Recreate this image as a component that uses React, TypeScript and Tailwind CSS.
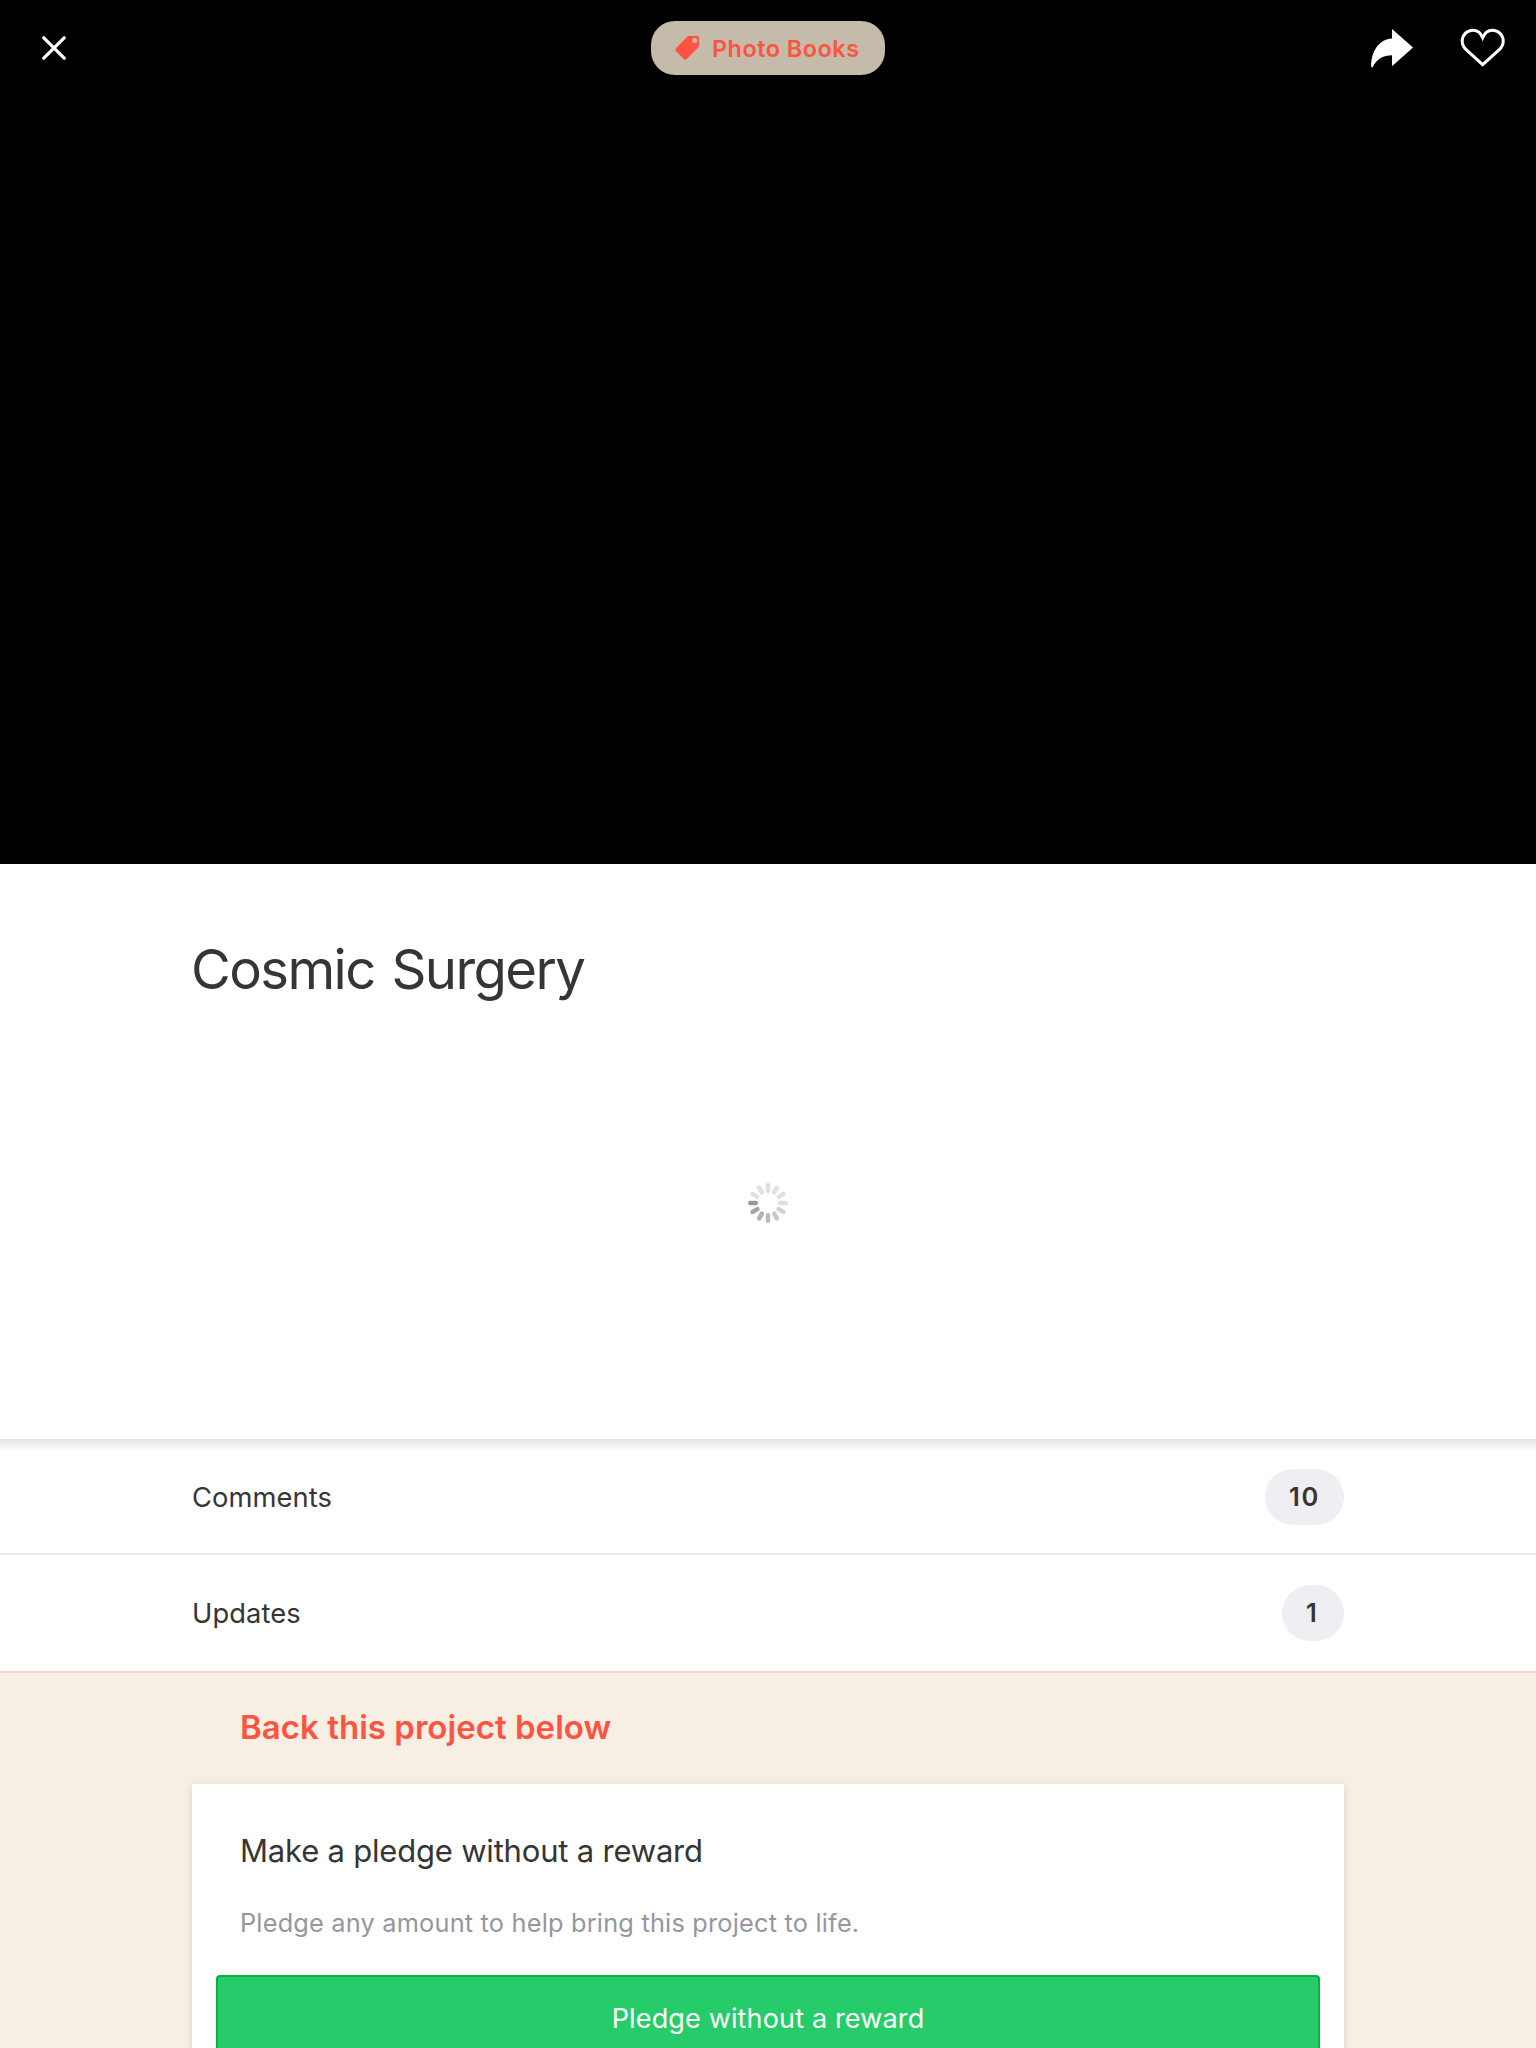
const spokes = [
  "#e0e0e0", "#e0e0e0", "#e0e0e0", "#dedede", "#d2d2d2", "#c8c8c8",
  "#bababa", "#b0b0b0", "#a4a4a4", "#999999", "#e0e0e0", "#e0e0e0",
];

function Spinner() {
  return (
    <svg width="40" height="40" viewBox="-20 -20 40 40">
      {spokes.map((color, i) => (
        <line
          key={i}
          x1="0"
          y1="-17.8"
          x2="0"
          y2="-12.2"
          stroke={color}
          strokeWidth="4.4"
          strokeLinecap="round"
          transform={`rotate(${i * 30})`}
        />
      ))}
    </svg>
  );
}

function CountRow({ label, count, badge, row }: { label: string; count: string; badge: string; row: string }) {
  return (
    <div className={`flex items-center justify-between border-b-2 px-48 ${row}`}>
      <span className="pt-0.5 text-[27.3px] leading-8 tracking-[0.1px]">{label}</span>
      <span
        className={`flex h-14 items-center rounded-[28px] bg-[#efeef3] pl-6 text-[25.5px] font-semibold leading-8 tracking-[1.6px] ${badge}`}
      >
        {count}
      </span>
    </div>
  );
}

export default function App() {
  return (
    <div className="h-[2048px] w-[1536px] overflow-hidden bg-white font-['Inter',sans-serif] text-[#353535]">
      <section className="h-[864px] bg-black">
        <nav className="grid h-24 grid-cols-[1fr_auto_1fr] items-center pl-[42px] pr-[31px]">
          <div className="flex w-0">
            <svg width="24" height="24" viewBox="0 0 24 24" className="shrink-0" fill="none" stroke="#fff" strokeWidth="3.2" strokeLinecap="round">
              <path d="M1.8 1.8 22.2 22.2M22.2 1.8 1.8 22.2" />
            </svg>
          </div>
          <div className="ml-[-11px] flex h-[54px] w-[234px] items-center gap-[13px] rounded-3xl bg-[#c4bbab] pl-6 text-[#ff5442]">
            <svg width="24" height="24" viewBox="0 0 24 24" fill="currentColor" fillRule="evenodd">
              <path d="M12.9 0H22.5Q24 0 24 1.5V10.7L11.3 23.4Q10.3 24.3 9.3 23.4L.6 14.7Q-.3 13.7 .6 12.7ZM19.7 1.9A2.5 2.5 0 1 0 19.7 6.9A2.5 2.5 0 1 0 19.7 1.9Z" />
            </svg>
            <span className="whitespace-nowrap pt-0.5 text-[23.5px] font-semibold leading-7 tracking-[0.45px]">Photo Books</span>
          </div>
          <div className="flex items-center justify-end gap-12">
            <svg width="42" height="39" viewBox="0 0 42 39" fill="#fff">
              <path d="M21 0 42 18.5 21 37.3V26.2C12.5 26.2 5.8 29.7 1.7 38.2H.2C-.4 23.5 7.5 10.2 21 9.5Z" />
            </svg>
            <svg width="44" height="39" viewBox="0.3 0.6 44 39" className="overflow-visible" fill="none" stroke="#fff" strokeWidth="3" strokeLinejoin="miter">
              <path d="M22 9.2C20 4.5 16.5 1.8 12.3 1.8C6.2 1.8 1.5 6.7 1.5 12.8C1.5 16.6 3 19 5.7 21.5L22 36.3L38.3 21.5C41 19 42.5 16.6 42.5 12.8C42.5 6.7 37.8 1.8 31.7 1.8C27.5 1.8 24 4.5 22 9.2Z" />
            </svg>
          </div>
        </nav>
      </section>

      <section className="flex h-[575px] flex-col">
        <h1 className="mt-[73px] pl-[191px] text-[54.5px] leading-[64px] tracking-[-1.6px] [word-spacing:3px]">Cosmic Surgery</h1>
        <div className="mt-[182px] flex justify-center">
          <Spinner />
        </div>
      </section>

      <section>
        <div className="h-3 bg-linear-to-b from-[#e1e1e1] to-white" />
        <div className="-mt-3">
          <CountRow label="Comments" count="10" badge="w-[79px]" row="h-[116px] pt-0.5 border-[#ececec]" />
          <CountRow label="Updates" count="1" badge="w-[62px]" row="h-[118px] border-[#f6d5ca]" />
        </div>
      </section>

      <section className="h-[375px] bg-[#f8efe4] px-48 pt-[34px]">
        <h2 className="pl-12 text-[33px] font-semibold leading-10 tracking-[0.03px] text-[#ff5442]">Back this project below</h2>
        <div className="mt-[37px] h-[320px] bg-white pt-[47px] shadow-[0_2px_8px_rgba(60,40,60,0.15)]">
          <h3 className="pl-12 text-[31px] leading-10 tracking-[-0.2px]">Make a pledge without a reward</h3>
          <p className="mt-9 pl-12 text-[25.3px] leading-8 tracking-[0.21px] text-[#97959f]">
            Pledge any amount to help bring this project to life.
          </p>
          <button className="mx-6 mt-9 flex h-[88px] w-[1104px] justify-center rounded-[4px] border-2 border-[#0bb042] bg-[#26cc69] pt-[26px] text-[27px] leading-8 tracking-[0.15px] text-white">
            Pledge without a reward
          </button>
        </div>
      </section>
    </div>
  );
}
